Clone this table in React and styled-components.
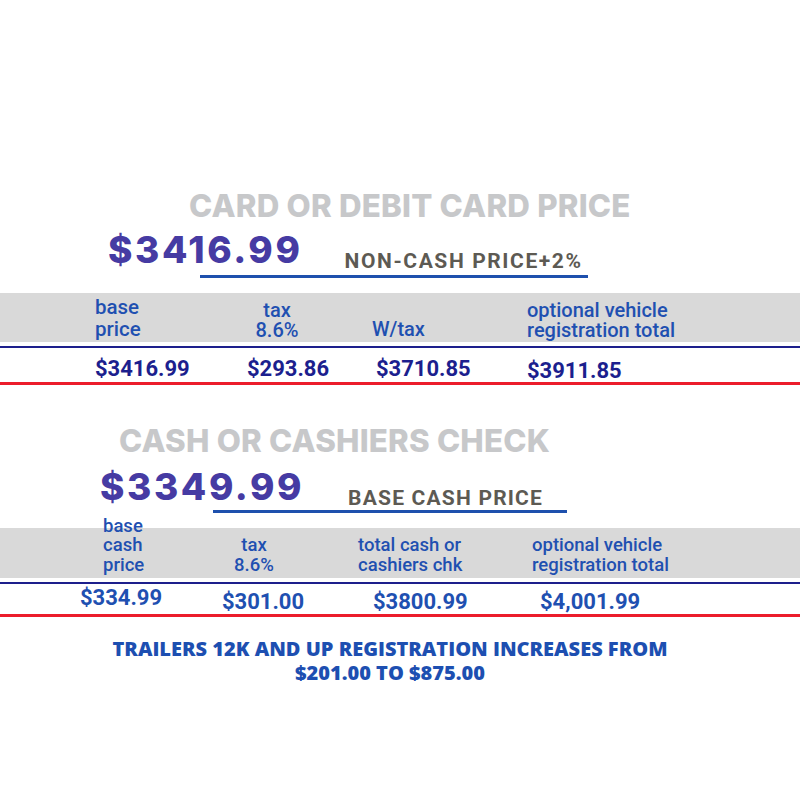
import React from "react";
import styled, { createGlobalStyle } from "styled-components";

const Global = createGlobalStyle`
  html, body { margin: 0; padding: 0; background: #ffffff; }
  body { width: 800px; height: 800px; overflow: hidden; }
`;

const Page = styled.div`
  width: 800px;
  height: 800px;
  display: flex;
  flex-direction: column;
  background: #fff;
`;

const Section = styled.section`
  display: flex;
  flex-direction: column;
  margin-top: ${(p) => p.$top}px;
`;

const Title = styled.h2`
  margin: 0 0 0 ${(p) => p.$x}px;
  height: 40px;
  line-height: 40px;
  font-family: Inter, "Open Sans", sans-serif;
  font-weight: 800;
  font-size: 31.3px;
  color: #c7c8ca;
  letter-spacing: 0.2px;
  white-space: nowrap;
`;

const PriceRow = styled.div`
  display: flex;
  align-items: baseline;
  margin-top: ${(p) => p.$mt}px;
  height: ${(p) => p.$h}px;
  padding-left: ${(p) => p.$x}px;
`;

const BigPrice = styled.span`
  font-family: Inter, "Open Sans", sans-serif;
  font-weight: 800;
  font-size: 37px;
  letter-spacing: 2.6px;
  color: #463ba3;
  line-height: 1;
`;

const SubLabel = styled.span`
  margin-left: ${(p) => p.$gap}px;
  font-family: Roboto, "Liberation Sans", sans-serif;
  font-weight: 700;
  font-size: 21px;
  letter-spacing: ${(p) => p.$ls}px;
  color: #5d5a53;
  position: relative;
  top: ${(p) => p.$drop}px;
`;

const Underline = styled.div`
  margin-left: ${(p) => p.$x}px;
  width: ${(p) => p.$w}px;
  height: 3px;
  background: #1e50ad;
`;

const Band = styled.div`
  margin-top: ${(p) => p.$top}px;
  height: ${(p) => p.$h}px;
  background: #d9d9d9;
  display: flex;
  align-items: flex-end;
  padding: 0 0 ${(p) => p.$pb}px ${(p) => p.$pl}px;
  box-sizing: border-box;
`;

const Cell = styled.div`
  flex: 0 0 ${(p) => p.$w}px;
  display: flex;
  flex-direction: column;
  align-items: flex-start;
`;

const Label = styled.div`
  font-family: Roboto, "Liberation Sans", sans-serif;
  font-weight: 500;
  font-size: ${(p) => p.$fs || 18.5}px;
  line-height: ${(p) => p.$lh || 20}px;
  color: #1f50b1;
  text-align: ${(p) => p.$align || "left"};
  margin-left: ${(p) => p.$dx || 0}px;
  width: ${(p) => (p.$w ? `${p.$w}px` : "auto")};
  white-space: nowrap;
`;

const NavyRule = styled.div`
  margin-top: 4px;
  height: 2px;
  background: #1d1f8c;
`;

const RedRule = styled.div`
  height: 3px;
  background: #ec1c2b;
`;

const ValueRow = styled.div`
  height: ${(p) => p.$h}px;
  display: flex;
  align-items: flex-end;
  padding: 0 0 ${(p) => p.$pb}px ${(p) => p.$pl}px;
  box-sizing: border-box;
`;

const Value = styled.div`
  font-family: Roboto, "Liberation Sans", sans-serif;
  font-weight: 700;
  font-size: 22px;
  line-height: 22px;
  color: ${(p) => p.$color};
  margin-left: ${(p) => p.$dx || 0}px;
  position: relative;
  top: ${(p) => p.$dy || 0}px;
  white-space: nowrap;
`;

const Notice = styled.p`
  margin: 20px 20px 0 0;
  text-align: center;
  font-family: "Open Sans", Inter, sans-serif;
  font-weight: 800;
  font-size: 20px;
  line-height: 24px;
  color: #1d4fb1;
`;

const widths1 = [152, 125, 155, 200];
const widths2 = [150, 138, 167, 200];

export default function App() {
  return (
    <Page>
      <Global />
      <Section $top={186}>
        <Title $x={189}>CARD OR DEBIT CARD PRICE</Title>
        <PriceRow $mt={5} $h={44} $x={108}>
          <BigPrice>$3416.99</BigPrice>
          <SubLabel $gap={42} $drop={5} $ls={1.6}>NON-CASH PRICE+2%</SubLabel>
        </PriceRow>
        <Underline $x={200} $w={388} />
        <Band $top={15} $h={49} $pl={95} $pb={2}>
          <Cell $w={widths1[0]}>
            <Label $fs={20.5} $lh={22}>base<br />price</Label>
          </Cell>
          <Cell $w={widths1[1]}>
            <Label $fs={20} $lh={20} $align="center" $w={60}>tax<br />8.6%</Label>
          </Cell>
          <Cell $w={widths1[2]}>
            <Label $fs={20} $lh={22}>W/tax</Label>
          </Cell>
          <Cell $w={widths1[3]}>
            <Label $fs={20} $lh={20}>optional vehicle<br />registration total</Label>
          </Cell>
        </Band>
        <NavyRule />
        <ValueRow $h={34} $pl={95} $pb={2}>
          <Cell $w={widths1[0]}><Value $color="#1c1f8e">$3416.99</Value></Cell>
          <Cell $w={widths1[1]}><Value $color="#1c1f8e">$293.86</Value></Cell>
          <Cell $w={widths1[2]}><Value $color="#1c1f8e" $dx={4}>$3710.85</Value></Cell>
          <Cell $w={widths1[3]}><Value $color="#1c1f8e" $dy={2}>$3911.85</Value></Cell>
        </ValueRow>
        <RedRule />
      </Section>

      <Section $top={36}>
        <Title $x={119}>CASH OR CASHIERS CHECK</Title>
        <PriceRow $mt={7} $h={42} $x={100}>
          <BigPrice>$3349.99</BigPrice>
          <SubLabel $gap={44} $drop={5} $ls={1.2}>BASE CASH PRICE</SubLabel>
        </PriceRow>
        <Underline $x={213} $w={354} />
        <Band $top={15} $h={50} $pl={80} $pb={3}>
          <Cell $w={widths2[0]}>
            <Label $lh={19.5} $dx={23}>base<br />cash<br />price</Label>
          </Cell>
          <Cell $w={widths2[1]}>
            <Label $lh={19.5} $align="center" $w={48}>tax<br />8.6%</Label>
          </Cell>
          <Cell $w={widths2[2]}>
            <Label $lh={19.5} $dx={-10}>total cash or<br />cashiers chk</Label>
          </Cell>
          <Cell $w={widths2[3]}>
            <Label $lh={19.5} $dx={-3}>optional vehicle<br />registration total</Label>
          </Cell>
        </Band>
        <NavyRule />
        <ValueRow $h={30} $pl={80} $pb={1}>
          <Cell $w={widths2[0]}><Value $color="#1f50b1" $dy={-4}>$334.99</Value></Cell>
          <Cell $w={widths2[1]}><Value $color="#1f50b1" $dx={-8}>$301.00</Value></Cell>
          <Cell $w={widths2[2]}><Value $color="#1f50b1" $dx={5}>$3800.99</Value></Cell>
          <Cell $w={widths2[3]}><Value $color="#1f50b1" $dx={5}>$4,001.99</Value></Cell>
        </ValueRow>
        <RedRule />
        <Notice>
          TRAILERS 12K AND UP REGISTRATION INCREASES FROM
          <br />
          $201.00 TO $875.00
        </Notice>
      </Section>
    </Page>
  );
}
